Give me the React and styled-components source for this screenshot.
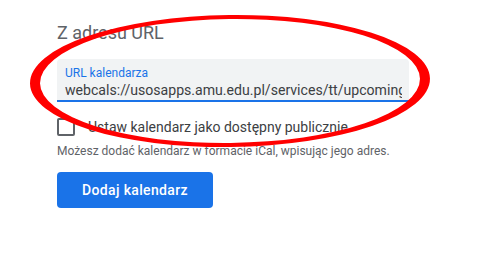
import styled, { createGlobalStyle } from "styled-components";

const GlobalStyle = createGlobalStyle`
  html, body {
    margin: 0;
    padding: 0;
    background: #fff;
  }
  body {
    font-family: Roboto, "Liberation Sans", Arial, sans-serif;
  }
`;

const Page = styled.div`
  position: relative;
  width: 479px;
  height: 264px;
  overflow: hidden;
  box-sizing: border-box;
  padding: 21px 0 0 57px;
`;

const Heading = styled.h2`
  margin: 0;
  font-size: 18px;
  line-height: 24px;
  font-weight: 400;
  color: #5f6368;
`;

const Field = styled.div`
  margin-top: 14px;
  width: 352px;
  box-sizing: border-box;
  background: #f1f3f4;
  border-bottom: 2px solid #1a73e8;
  border-radius: 4px 4px 0 0;
  padding: 7px 7px 0 8px;
  display: flex;
  flex-direction: column;
`;

const FieldLabel = styled.label`
  font-size: 12px;
  line-height: 14px;
  color: #1a73e8;
`;

const FieldInput = styled.input`
  border: none;
  outline: none;
  background: transparent;
  padding: 0;
  margin: 0;
  width: 100%;
  height: 20px;
  font-family: inherit;
  font-size: 14.1px;
  line-height: 20px;
  color: #3c4043;
`;

const CheckRow = styled.label`
  margin-top: 15px;
  display: flex;
  align-items: center;
  gap: 13px;
  height: 20px;
  font-size: 14px;
  line-height: 20px;
  color: #3c4043;
`;

const Box = styled.span`
  width: 18px;
  height: 18px;
  box-sizing: border-box;
  border: 2px solid #5f6368;
  border-radius: 2px;
  flex: none;
`;

const Hint = styled.div`
  margin-top: 6px;
  font-size: 12px;
  line-height: 16px;
  color: #5f6368;
`;

const Button = styled.button`
  margin-top: 13px;
  width: 156px;
  height: 36px;
  border: none;
  border-radius: 4px;
  background: #1a73e8;
  color: #fff;
  font-family: inherit;
  font-size: 14px;
  font-weight: 500;
  letter-spacing: 0.35px;
  cursor: pointer;
`;

const Marker = styled.svg`
  position: absolute;
  left: 0;
  top: 0;
  pointer-events: none;
`;

const url =
  "webcals://usosapps.amu.edu.pl/services/tt/upcoming_ical?lang=pl&user_id=123456&key=abcdef";

export default function App() {
  return (
    <>
      <GlobalStyle />
      <Page>
        <Heading>Z adresu URL</Heading>
        <Field>
          <FieldLabel>URL kalendarza</FieldLabel>
          <FieldInput defaultValue={url} readOnly />
        </Field>
        <CheckRow>
          <Box />
          Ustaw kalendarz jako dostępny publicznie
        </CheckRow>
        <Hint>Możesz dodać kalendarz w formacie iCal, wpisując jego adres.</Hint>
        <Button>Dodaj kalendarz</Button>
        <Marker width="479" height="264" viewBox="0 0 479 264">
          <path
            transform="rotate(-0.7 230 82)"
            fillRule="evenodd"
            fill="#ff0000"
            d="M30 81 a200 66 0 1 0 400 0 a200 66 0 1 0 -400 0 Z M40 81 a190 62 0 1 0 380 0 a190 62 0 1 0 -380 0 Z"
          />
        </Marker>
      </Page>
    </>
  );
}
